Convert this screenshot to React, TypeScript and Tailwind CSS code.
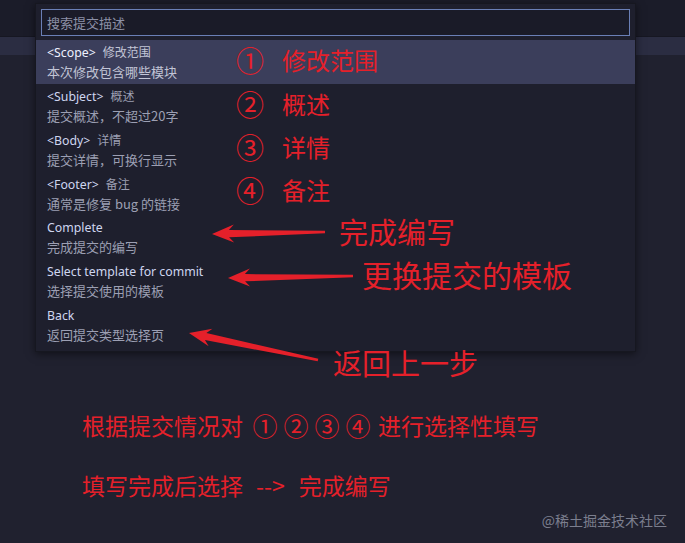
import React from "react";

type Item = { title: string; note?: string; detail: string };

const ITEMS: Item[] = [
  { title: "<Scope>", note: "修改范围", detail: "本次修改包含哪些模块" },
  { title: "<Subject>", note: "概述", detail: "提交概述，不超过20字" },
  { title: "<Body>", note: "详情", detail: "提交详情，可换行显示" },
  { title: "<Footer>", note: "备注", detail: "通常是修复 bug 的链接" },
  { title: "Complete", detail: "完成提交的编写" },
  { title: "Select template for commit", detail: "选择提交使用的模板" },
  { title: "Back", detail: "返回提交类型选择页" },
];

const NOTES = [
  { num: "①", text: "修改范围", top: 46 },
  { num: "②", text: "概述", top: 90 },
  { num: "③", text: "详情", top: 133 },
  { num: "④", text: "备注", top: 176 },
];

const ARROWS: [number, number, number, number][] = [
  [212, 234, 325, 232],
  [228, 278, 353, 276],
  [189, 333, 318, 360],
];

function arrowPoints(x1: number, y1: number, x2: number, y2: number) {
  const len = Math.hypot(x2 - x1, y2 - y1);
  const ux = (x2 - x1) / len;
  const uy = (y2 - y1) / len;
  const nx = -uy;
  const ny = ux;
  const p = (d: number, w: number) =>
    `${(x1 + ux * d + nx * w).toFixed(1)},${(y1 + uy * d + ny * w).toFixed(1)}`;
  return [
    p(0, 0),
    p(22, 9),
    p(17, 3.6),
    p(len, 1.3),
    p(len, -1.3),
    p(17, -3.6),
    p(22, -9),
  ].join(" ");
}

const font = { fontFamily: '"Noto Sans", "Noto Sans CJK SC", sans-serif' };
const cjk = { fontFamily: '"Noto Sans CJK SC", sans-serif' };

function Circled({ n }: { n: string }) {
  return (
    <span className="inline-flex w-[24px] justify-center text-[25px] leading-[30px]">{n}</span>
  );
}

export default function App() {
  return (
    <div className="relative h-[543px] w-[685px] overflow-hidden bg-[#20212f]" style={font}>
      <div className="h-[37px] border-b border-[#161722] bg-[#1b1c29]" />
      <div className="h-[18px] bg-[#2b2d42]" />

      <div className="flex flex-col pl-[82px] pt-[355px] text-[#e5202a]" style={cjk}>
        <p className="flex items-center text-[23px] leading-[30px]">
          <span>根据提交情况对</span>
          <span className="ml-[10px] flex gap-[7px]">
            <Circled n="①" />
            <Circled n="②" />
            <Circled n="③" />
            <Circled n="④" />
          </span>
          <span className="ml-[8px]">进行选择性填写</span>
        </p>
        <p className="mt-[30px] flex items-center text-[23px] leading-[30px]">
          <span>填写完成后选择</span>
          <span className="ml-[13px]">--&gt;</span>
          <span className="ml-[14px]">完成编写</span>
        </p>
        <p className="mt-[10px] self-end pr-[18px] text-[14px] leading-[20px] text-[#7b7e8e]">@稀土掘金技术社区</p>
      </div>

      {/* quick pick */}
      <div className="absolute left-[35px] top-[3px] w-[601px] border border-[#161720] bg-[#1e1f2d] shadow-[0_2px_8px_rgba(0,0,0,0.5)]">
        <div className="px-[5px] pt-[5px]">
          <div className="flex h-[27px] items-center border border-[#6a7fb6] bg-[#1a1b28] px-[5px] text-[13px] text-[#8c90a6]" style={cjk}>
            搜索提交描述
          </div>
        </div>
        <div className="mt-[4px] flex flex-col">
          {ITEMS.map((it, i) => (
            <div
              key={it.title}
              className={`flex h-[44px] flex-col justify-center pb-[2px] pl-[11px] ${i === 0 ? "bg-[#3b3e5b]" : ""}`}
            >
              <div className="flex items-baseline leading-[19px]">
                <span className={`text-[12.3px] ${i === 0 ? "text-[#eef1ff]" : "text-[#cfd6f0]"}`}>{it.title}</span>
                {it.note && (
                  <span className={`ml-[7px] text-[12px] ${i === 0 ? "text-[#c2c5d6]" : "text-[#9c9fb3]"}`} style={cjk}>
                    {it.note}
                  </span>
                )}
              </div>
              <div className={`text-[13px] leading-[19px] ${i === 0 ? "text-[#c2c5d6]" : "text-[#9c9fb3]"}`} style={cjk}>
                {it.detail}
              </div>
            </div>
          ))}
        </div>
        <div className="h-[3px]" />
      </div>

      {/* annotations */}
      {NOTES.map((n) => (
        <div
          key={n.num}
          className="absolute left-[236px] flex items-center text-[24px] leading-[28px] text-[#e5202a]"
          style={{ ...cjk, top: n.top }}
        >
          <span className="w-[46px] text-[28px] leading-[28px]">{n.num}</span>
          <span>{n.text}</span>
        </div>
      ))}
      <div className="absolute left-[339px] top-[213px] text-[29px] leading-[36px] text-[#e5202a]" style={cjk}>完成编写</div>
      <div className="absolute left-[362px] top-[256px] text-[30px] leading-[36px] text-[#e5202a]" style={cjk}>更换提交的模板</div>
      <div className="absolute left-[333px] top-[344px] text-[29px] leading-[36px] text-[#e5202a]" style={cjk}>返回上一步</div>

      <svg className="pointer-events-none absolute left-0 top-0" width="685" height="543">
        {ARROWS.map((a, i) => (
          <polygon key={i} points={arrowPoints(a[0], a[1], a[2], a[3])} fill="#e5202a" />
        ))}
      </svg>
    </div>
  );
}
